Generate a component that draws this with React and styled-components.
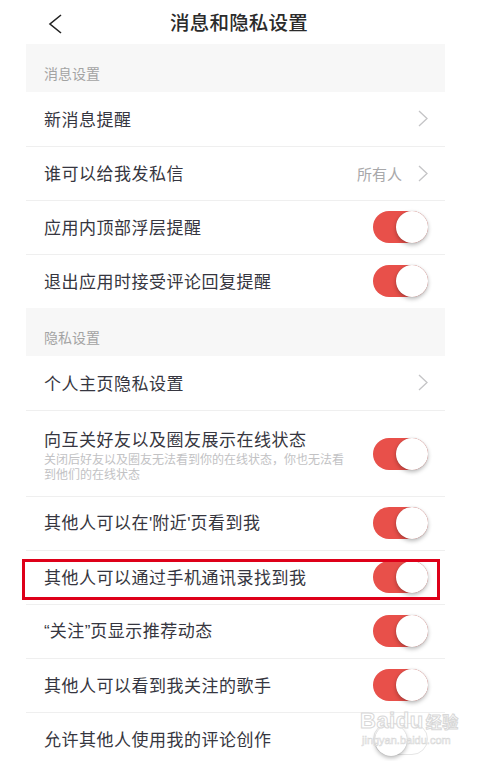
import React from "react";
import styled, { createGlobalStyle } from "styled-components";

const Global = createGlobalStyle`
  html, body { margin: 0; padding: 0; background: #fff; }
  body { font-family: "Noto Sans CJK SC", "Noto Sans", sans-serif; -webkit-font-smoothing: antialiased; }
  * { box-sizing: border-box; }
`;

const Page = styled.div`
  width: 478px;
  height: 761px;
  overflow: hidden;
  position: relative;
  background: #fff;
`;

const Header = styled.header`
  height: 44px;
  display: flex;
  align-items: center;
  justify-content: center;
  position: relative;
`;

const BackBtn = styled.button`
  position: absolute;
  left: 44px;
  top: 12px;
  width: 22px;
  height: 24px;
  padding: 0;
  border: 0;
  background: none;
  display: flex;
  align-items: center;
  justify-content: center;
`;

const Title = styled.h1`
  margin: 0;
  font-size: 19.5px;
  font-weight: 500;
  color: #2b2b2b;
  letter-spacing: 0.2px;
  line-height: 1;
  padding-bottom: 1px;
`;

const Content = styled.main`
  padding: 0 33px 0 26px;
`;

const SectionHead = styled.div`
  height: 48px;
  background: #f7f7f7;
  display: flex;
  align-items: flex-end;
  padding: 0 0 9px 18px;
  font-size: 14px;
  color: #a3a3a3;
  line-height: 20px;
`;

const Row = styled.div`
  position: relative;
  display: flex;
  align-items: center;
  min-height: ${(p) => (p.$tall ? "86px" : "54px")};
  padding: ${(p) => (p.$tall ? "16px 17px 15px 18px" : "0 17px 1px 18px")};
  border-top: ${(p) => (p.$first ? "0" : "1px solid #efefef")};
`;

const Texts = styled.div`
  flex: 1;
  display: flex;
  flex-direction: column;
  min-width: 0;
`;

const Label = styled.div`
  font-size: 17px;
  letter-spacing: 0.5px;
  color: #363640;
  line-height: 24px;
  white-space: nowrap;
`;

const Quote = styled.span`
  font-family: "Liberation Sans", Arial, sans-serif;
  letter-spacing: 0;
`;

const Sub = styled.div`
  font-size: 12px;
  color: #c2c2c4;
  line-height: 15px;
  width: 305px;
`;

const Value = styled.span`
  font-size: 15px;
  color: #a8a8aa;
  margin-right: 16px;
`;

const Track = styled.div`
  width: 55px;
  height: 32px;
  border-radius: 16px;
  background: ${(p) => (p.$on ? "#e8504a" : "#fff")};
  border: ${(p) => (p.$on ? "0" : "1px solid #e6e6e6")};
  position: relative;
  flex: none;
`;

const Knob = styled.div`
  position: absolute;
  top: 0;
  ${(p) => (p.$on ? "right: 0;" : "left: 1px;")}
  width: 32px;
  height: 32px;
  border-radius: 50%;
  background: #fff;
  box-shadow: 0 2px 4px rgba(0, 0, 0, 0.28), 0 0 1px rgba(0, 0, 0, 0.2);
`;

const Highlight = styled.div`
  position: absolute;
  left: -4px;
  right: 5px;
  top: 8px;
  bottom: 4px;
  border: 3px solid #de0019;
  pointer-events: none;
`;

const Watermark = styled.div`
  position: absolute;
  left: 360px;
  top: 708px;
  width: 120px;
  display: flex;
  flex-direction: column;
  align-items: flex-start;
  color: rgba(255, 255, 255, 0.85);
  font-family: "Liberation Sans", Arial, sans-serif;
  pointer-events: none;
`;

const WmTop = styled.div`
  font-size: 22px;
  font-weight: 700;
  line-height: 26px;
  -webkit-text-stroke: 1px #d8d8d8;
  letter-spacing: 0.5px;
  span { font-family: "Noto Sans CJK SC", sans-serif; font-size: 16px; margin-left: 2px; }
`;

const WmBottom = styled.div`
  font-size: 11px;
  line-height: 13px;
  -webkit-text-stroke: 0.6px #d8d8d8;
  margin-left: 2px;
`;

const Chevron = () => (
  <svg width="10" height="17" viewBox="0 0 10 17" fill="none">
    <path d="M1 1l8 7.5L1 16" stroke="#c4c4c6" strokeWidth="1.3" />
  </svg>
);

const Toggle = ({ on }) => (
  <Track $on={on}>
    <Knob $on={on} />
  </Track>
);

const SettingRow = ({ label, sub, value, arrow, toggle, first, highlight }) => (
  <Row $first={first} $tall={!!sub}>
    <Texts>
      <Label>{label}</Label>
      {sub && <Sub>{sub}</Sub>}
    </Texts>
    {value && <Value>{value}</Value>}
    {arrow && <Chevron />}
    {toggle !== undefined && <Toggle on={toggle} />}
    {highlight && <Highlight />}
  </Row>
);

export default function App() {
  return (
    <Page>
      <Global />
      <Header>
        <BackBtn aria-label="返回">
          <svg width="16" height="20" viewBox="0 0 16 20" fill="none">
            <path d="M14 1L3 10l11 9" stroke="#222" strokeWidth="1.6" />
          </svg>
        </BackBtn>
        <Title>消息和隐私设置</Title>
      </Header>
      <Content>
        <SectionHead>消息设置</SectionHead>
        <SettingRow first label="新消息提醒" arrow />
        <SettingRow label="谁可以给我发私信" value="所有人" arrow />
        <SettingRow label="应用内顶部浮层提醒" toggle={true} />
        <SettingRow label="退出应用时接受评论回复提醒" toggle={true} />
        <SectionHead>隐私设置</SectionHead>
        <SettingRow first label="个人主页隐私设置" arrow />
        <SettingRow
          label="向互关好友以及圈友展示在线状态"
          sub="关闭后好友以及圈友无法看到你的在线状态，你也无法看到他们的在线状态"
          toggle={true}
        />
        <SettingRow
          label={<>其他人可以在<Quote>'</Quote>附近<Quote>'</Quote>页看到我</>}
          toggle={true}
        />
        <SettingRow label="其他人可以通过手机通讯录找到我" toggle={true} highlight />
        <SettingRow label={<><Quote>“</Quote>关注<Quote>”</Quote>页显示推荐动态</>} toggle={true} />
        <SettingRow label="其他人可以看到我关注的歌手" toggle={true} />
        <SettingRow label="允许其他人使用我的评论创作" toggle={false} />
      </Content>
      <Watermark aria-hidden="true">
        <WmTop>
          Baidu<span>经验</span>
        </WmTop>
        <WmBottom>jingyan.baidu.com</WmBottom>
      </Watermark>
    </Page>
  );
}
